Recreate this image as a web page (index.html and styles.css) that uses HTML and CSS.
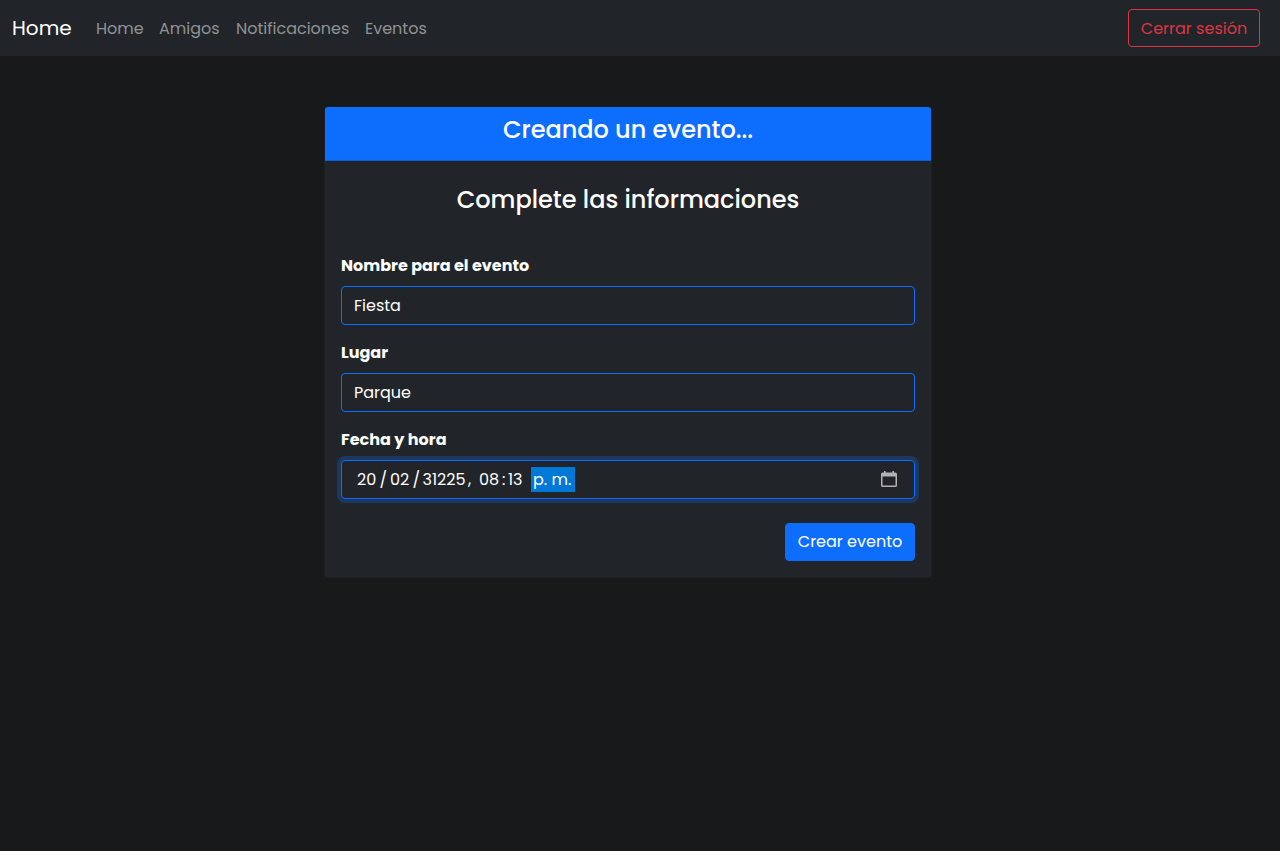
FILE: index.html
```html
<!DOCTYPE html>
<html lang="es">
<head>
<meta charset="utf-8">
<title>Crear evento</title>
<link rel="stylesheet" href="styles.css">
</head>
<body>
<nav class="navbar">
  <a class="brand">Home</a>
  <div class="links">
    <a class="l-home">Home</a>
    <a class="l-amigos">Amigos</a>
    <a class="l-notif">Notificaciones</a>
    <a class="l-eventos">Eventos</a>
  </div>
  <button class="logout" type="button">Cerrar sesión</button>
</nav>
<main class="card">
  <header class="card-header"><h1 class="title">Creando un evento...</h1></header>
  <form class="card-body">
    <h2 class="title subtitle">Complete las informaciones</h2>
    <div class="field">
      <label class="label">Nombre para el evento</label>
      <div class="control">Fiesta</div>
    </div>
    <div class="field">
      <label class="label">Lugar</label>
      <div class="control">Parque</div>
    </div>
    <div class="field">
      <label class="label">Fecha y hora</label>
      <div class="control focused">
        <div class="date">
          <span class="day">20</span><span class="slash">/</span><span class="month">02</span><span class="slash">/</span><span class="year">31225</span><span class="comma">,</span><span class="hour">08</span><span class="colon">:</span><span class="minute">13</span><span class="ampm">p. m.</span>
        </div>
        <svg class="calendar" width="18" height="18" viewBox="0 0 18 18">
          <path fill="#b2b2b2" fill-rule="evenodd" d="M4 1h1.600v1.600h6.800V1H14v1.600h1.400A1.600 1.600 0 0 1 17 4.200v11.200a1.600 1.600 0 0 1-1.600 1.600H2.600A1.600 1.600 0 0 1 1 15.400V4.200a1.600 1.600 0 0 1 1.600-1.600H4zM2.500 6.500v9.100h13V6.500z"/>
        </svg>
      </div>
    </div>
    <div class="actions"><button class="submit" type="button">Crear evento</button></div>
  </form>
</main>
</body>
</html>
```
FILE: styles.css
```css
* { box-sizing: border-box; }
body {
  margin: 0;
  min-height: 851px;
  background: #18191a;
  color: #fff;
  font: 400 16px/24px Poppins, Inter, "Open Sans", sans-serif;
}
.navbar {
  display: flex;
  align-items: center;
  height: 56px;
  padding: 0 20px 0 12px;
  background: #212529;
}
.brand { width: 84px; font-size: 20px; }
.links { display: flex; flex: 1; padding-top: 2px; color: #909294; }
.l-home { width: 63px; }
.l-amigos { width: 77px; }
.l-notif { width: 129px; }
button { font: inherit; border-radius: 4px; height: 38px; padding: 2px 0 0; white-space: nowrap; }
.logout { width: 132px; border: 1px solid #dc3545; background: transparent; color: #dc3545; }
.card {
  width: 608px;
  height: 472px;
  margin: 50px 0 0 324px;
  border: 1px solid #1e2124;
  border-radius: 4px;
  background: #212529;
}
.card-header {
  height: 54px;
  padding-top: 8px;
  border-bottom: 1px solid #0b5ed7;
  border-radius: 3px 3px 0 0;
  background: #0d6efd;
}
.title { margin: 0; font-size: 24px; line-height: 29px; font-weight: 500; text-align: center; }
.card-body { padding: 24px 16px 16px; }
.subtitle { margin-bottom: 40px; }
.field { margin-bottom: 16px; }
.label { display: block; height: 24px; margin-bottom: 8px; font-weight: 700; }
.control {
  display: flex;
  align-items: center;
  height: 39px;
  padding: 1px 12px 0;
  border: 1px solid #0d6efd;
  border-radius: 4px;
}
.focused { justify-content: space-between; padding: 0 16px 0 15px; box-shadow: 0 0 0 4px #1d3761; }
.date { display: flex; align-items: center; height: 25px; }
.date span { flex: none; line-height: 25px; white-space: nowrap; }
.day { width: 22.500px; }
.slash { width: 10.500px; }
.month { width: 22.500px; }
.year { width: 45.500px; }
.comma { width: 11px; }
.hour { width: 23px; }
.colon { width: 6px; }
.minute { width: 23px; }
.date .ampm { width: 44px; height: 25px; padding-left: 2px; background: #0078d7; }
.date .slash:nth-child(4) { width: 10px; }
.calendar { display: block; margin-bottom: 1px; }
.actions { display: flex; justify-content: flex-end; margin-top: 24px; }
.submit { width: 130px; padding: 0; border: 1px solid #0d6efd; background: #0d6efd; color: #fff; }
```
